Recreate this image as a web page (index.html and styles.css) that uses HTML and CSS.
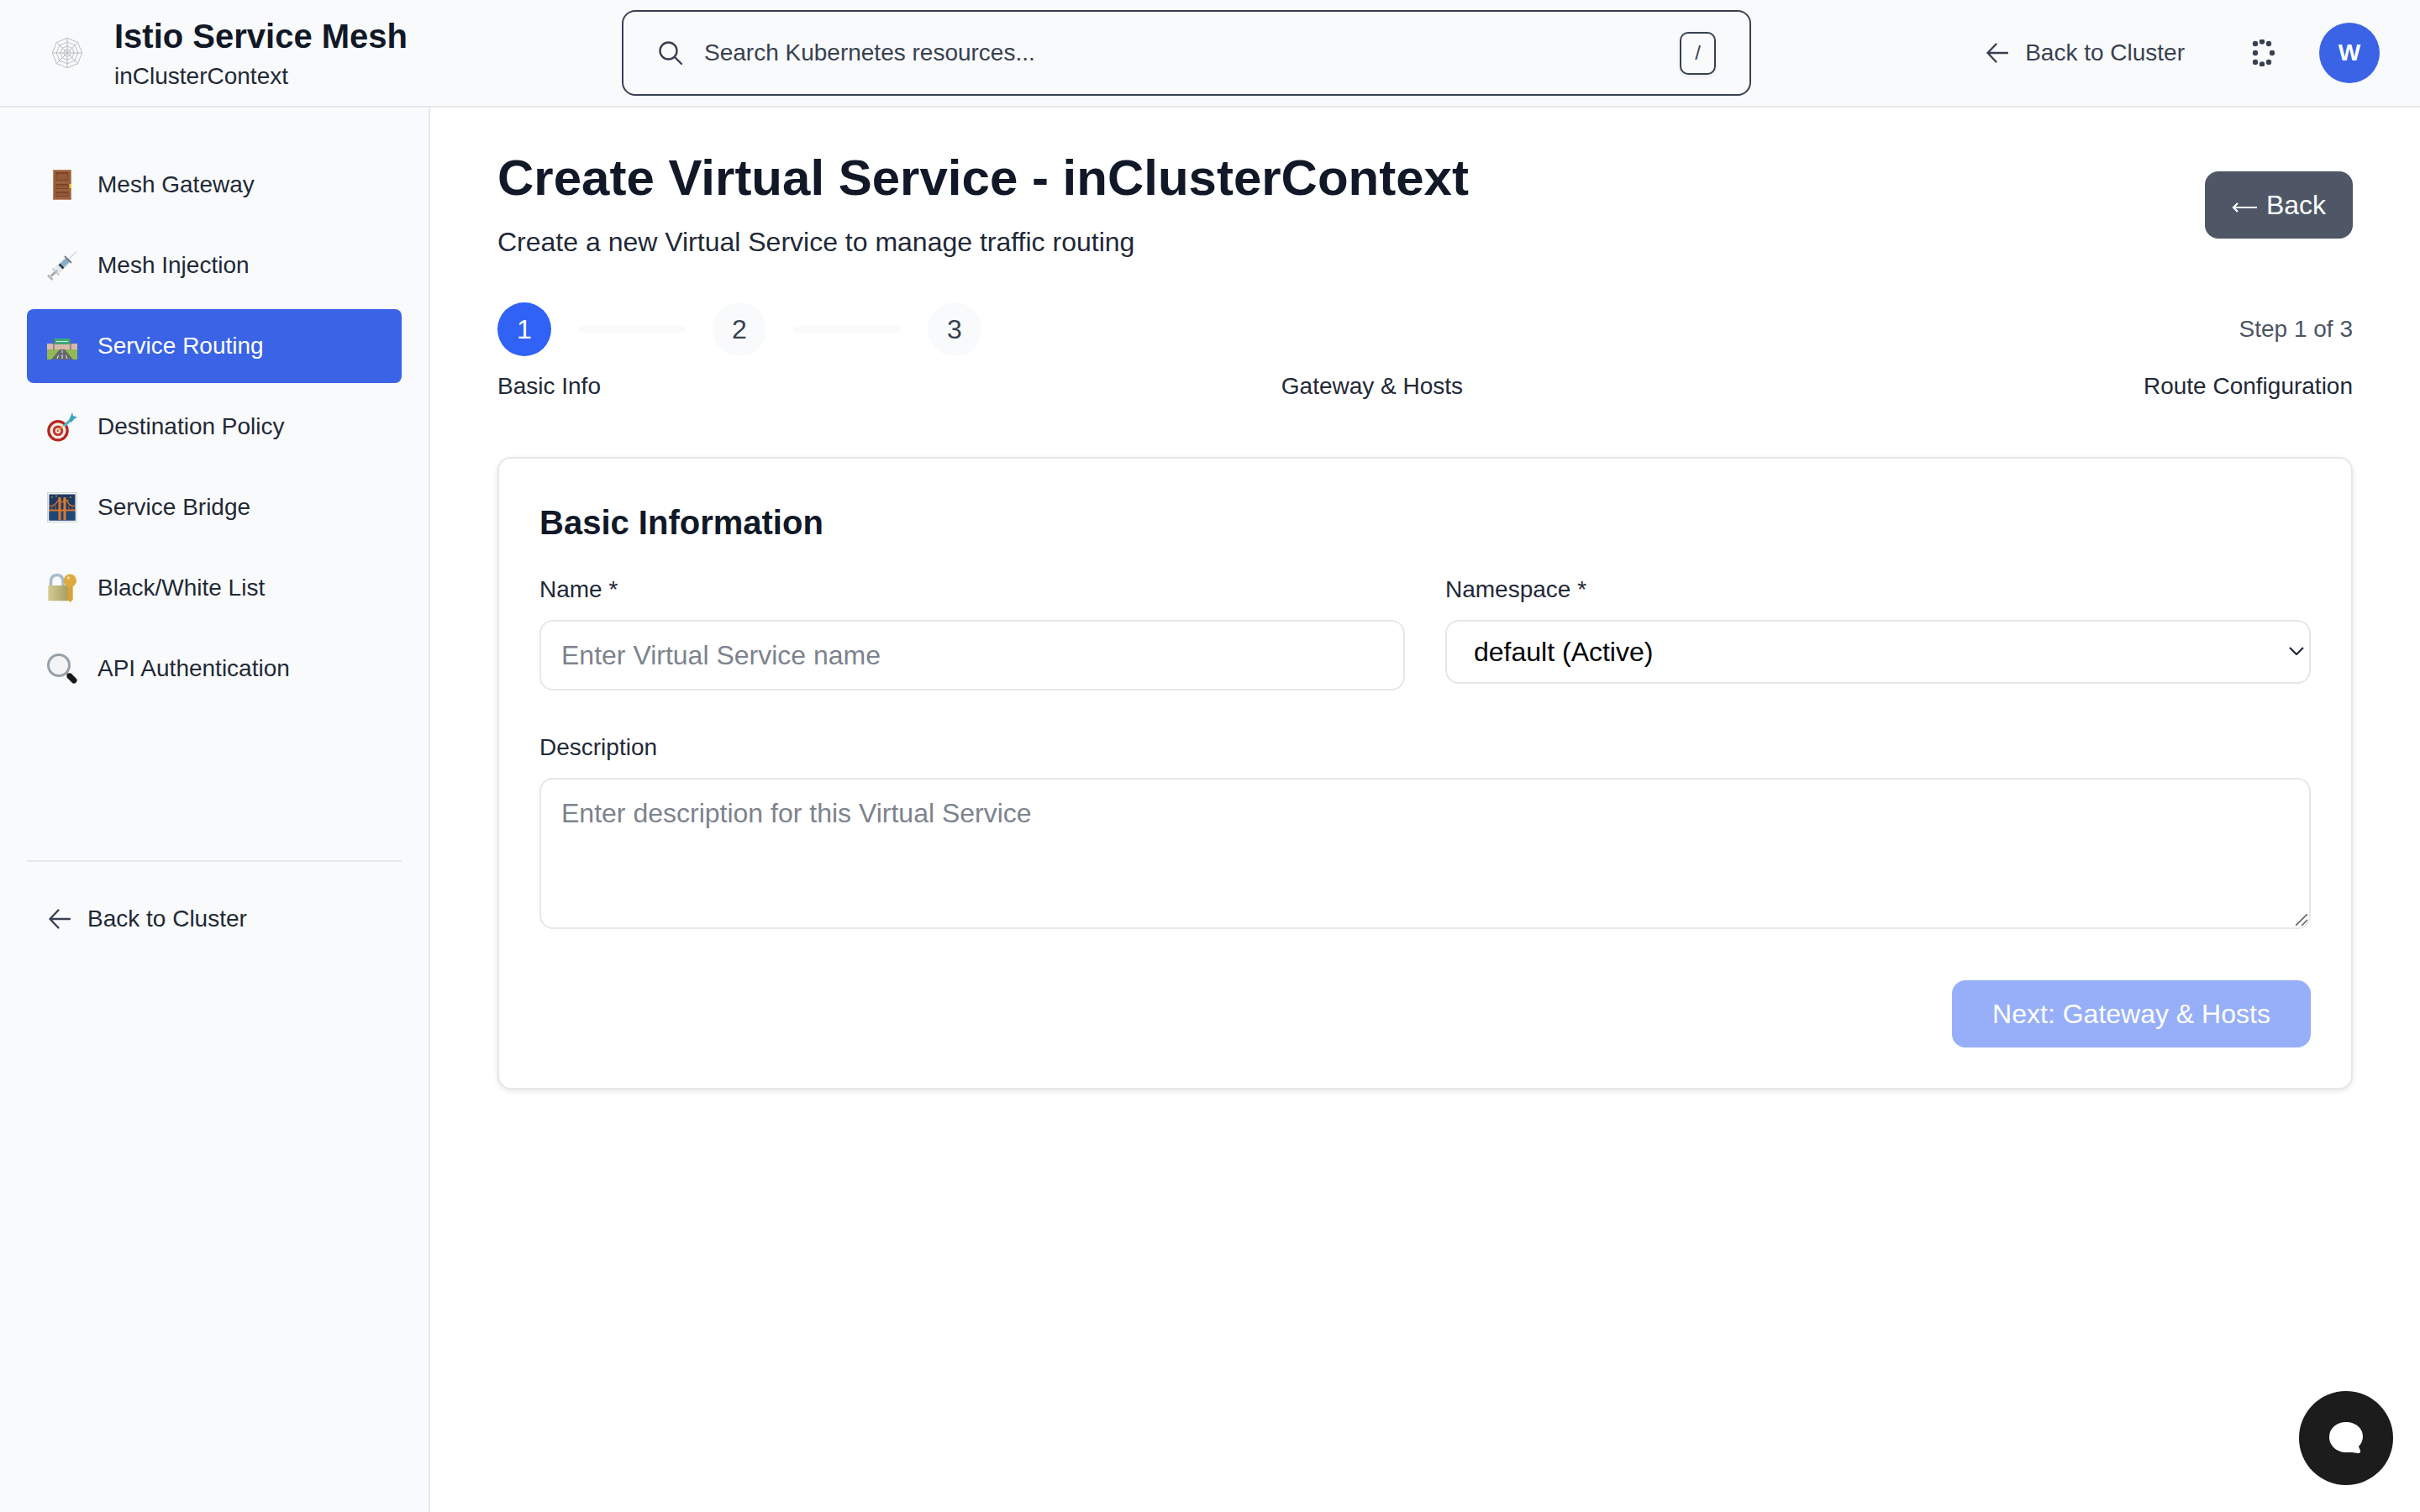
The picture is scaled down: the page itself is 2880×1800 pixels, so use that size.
FILE: index.html
```html
<!DOCTYPE html>
<html lang="en">
<head>
<meta charset="utf-8">
<title>Create Virtual Service</title>
<link rel="stylesheet" href="styles.css">
</head>
<body>
<header class="topbar">
  <div class="brand">
    <svg class="brand-icon" viewBox="-18 -18 36 36" fill="none" stroke="#b4b6ba" stroke-width="0.900">
      <defs>
        <path id="web" d="M0-18Q6.100-14.800 12.700-12.700Q14.800-6.100 18 0Q14.800 6.100 12.700 12.700Q6.100 14.800 0 18Q-6.100 14.800-12.700 12.700Q-14.800 6.100-18 0Q-14.800-6.100-12.700-12.700Q-6.100-14.800 0-18Z"/>
      </defs>
      <path d="M0-18V18M-18 0H18M-12.700-12.700L12.700 12.700M-12.700 12.700L12.700-12.700"/>
      <use href="#web"/>
      <use href="#web" transform="scale(.72)" stroke-width="1.250"/>
      <use href="#web" transform="scale(.46)" stroke-width="1.950"/>
      <use href="#web" transform="scale(.24)" stroke-width="3.700"/>
    </svg>
    <div class="brand-text">
      <div class="brand-title">Istio Service Mesh</div>
      <div class="brand-sub">inClusterContext</div>
    </div>
  </div>
  <div class="search">
    <svg class="search-icon" viewBox="0 0 28 28" fill="none" stroke="#374151" stroke-width="2.400" stroke-linecap="round">
      <circle cx="11.500" cy="11.500" r="10"/>
      <path d="M19 19L27 27"/>
    </svg>
    <span class="search-text">Search Kubernetes resources...</span>
    <span class="kbd">/</span>
  </div>
  <div class="top-actions">
    <a class="top-back">
      <svg class="arrow" viewBox="0 0 26 24" fill="none" stroke="#374151" stroke-width="2.400" stroke-linecap="round" stroke-linejoin="round">
        <path d="M25 12H1.500M11.500 1.500L1.500 12l10 10.500"/>
      </svg>
      <span>Back to Cluster</span>
    </a>
    <svg class="spinner" viewBox="0 0 32 32" fill="#374151">
      <circle cx="16" cy="2.500" r="3.200"/>
      <circle cx="24" cy="5" r="3.200"/>
      <circle cx="28" cy="16" r="3.200"/>
      <circle cx="24" cy="27" r="3.200"/>
      <circle cx="16" cy="29.500" r="3.200"/>
      <circle cx="8" cy="27" r="3.200"/>
      <circle cx="8" cy="16" r="3.200"/>
      <circle cx="8" cy="5" r="3.200"/>
    </svg>
    <div class="avatar">W</div>
  </div>
</header>

<div class="body-row">
  <aside class="sidebar">
    <nav class="nav">
      <a class="nav-item">
        <svg class="emoji" viewBox="0 0 36 36">
          <rect x="7" y="0" width="22" height="36" fill="#9c5f3c"/>
          <rect x="7.400" y="0.400" width="21.200" height="35.200" fill="none" stroke="#c29277" stroke-width="0.800"/>
          <rect x="10.500" y="3" width="15" height="10" fill="#7a4429"/>
          <rect x="11.500" y="5" width="13" height="7" fill="#925a39"/>
          <rect x="10.500" y="17" width="15" height="6" fill="#7a4429"/>
          <rect x="11.500" y="19" width="13" height="3" fill="#925a39"/>
          <rect x="10.500" y="26" width="15" height="6" fill="#7a4429"/>
          <rect x="11.500" y="28" width="13" height="3" fill="#925a39"/>
          <rect x="26.500" y="17" width="2.500" height="5" fill="#e9c53e"/>
        </svg>
        <span>Mesh Gateway</span>
      </a>
      <a class="nav-item">
        <svg class="emoji" viewBox="0 0 36 36">
          <path d="M25 11L35.500 1" stroke="#d2d5d8" stroke-width="1.200"/>
          <path d="M28.200 14.200L21.800 7.800L8.800 20.800L15.200 27.200Z" fill="#e3e7ea"/>
          <path d="M27 13.500L22.500 9L15.500 16L20 20.500Z" fill="#86aec9"/>
          <path d="M14.500 16.500L19.500 21.500" stroke="#33383d" stroke-width="2.500"/>
          <path d="M21 7L29 15" stroke="#5a6167" stroke-width="1.600"/>
          <path d="M12 24L5 30.500" stroke="#a4a8ad" stroke-width="3"/>
          <path d="M6.500 21.500L14.500 29.500" stroke="#c3c7ca" stroke-width="2"/>
          <path d="M1 29.500L6.500 35" stroke="#b5b9bd" stroke-width="3"/>
        </svg>
        <span>Mesh Injection</span>
      </a>
      <a class="nav-item active">
        <svg class="emoji" viewBox="0 0 36 36">
          <rect x="0" y="15" width="36" height="7" fill="#d9b9aa"/>
          <rect x="0" y="22" width="36" height="12" fill="#93b955"/>
          <path d="M15 22H21L31 34H5Z" fill="#64696e"/>
          <path d="M18 23V26M18 28V33M13.500 29L12 33M22.500 29L24 33" stroke="#f1f1f1" stroke-width="1"/>
          <path d="M8 10V23M28 10V23" stroke="#6b7075" stroke-width="1.200"/>
          <path d="M6 15H30" stroke="#6b7075" stroke-width="1"/>
          <rect x="9" y="9" width="18" height="7" fill="#3fa974"/>
          <path d="M11 12.500H25" stroke="#c9ecd9" stroke-width="1"/>
        </svg>
        <span>Service Routing</span>
      </a>
      <a class="nav-item">
        <svg class="emoji" viewBox="0 0 36 36">
          <circle cx="13" cy="22.700" r="12.800" fill="#b5281f"/>
          <circle cx="13" cy="22.700" r="9.500" fill="#f4ece8"/>
          <circle cx="13" cy="22.700" r="6.300" fill="#c5362c"/>
          <circle cx="13" cy="22.700" r="3.200" fill="#f4ece8"/>
          <circle cx="13" cy="22.700" r="1.300" fill="#c5362c"/>
          <path d="M13 22.700L20 16" stroke="#dcae3f" stroke-width="1.200"/>
          <path d="M19 16L27 9L29 11L22 18Z" fill="#4bb4c6"/>
          <path d="M26 10L30 1L31 5L36 6.500L32 9L29 13Z" fill="#3da6b8"/>
        </svg>
        <span>Destination Policy</span>
      </a>
      <a class="nav-item">
        <svg class="emoji" viewBox="0 0 36 36">
          <rect x="0.400" y="0.400" width="35.200" height="35.200" fill="#eef0f2" stroke="#c8ccd0" stroke-width="0.800"/>
          <rect x="2.500" y="2.500" width="31" height="31" fill="#1d3a63"/>
          <rect x="2.500" y="23" width="31" height="10.500" fill="#1f4679"/>
          <path d="M2.500 16Q10 18 15 6M33.500 16Q26 18 21 6M15 6Q18 18 21 6" stroke="#d9782f" stroke-width="1.200" fill="none"/>
          <rect x="2.500" y="20.500" width="31" height="2" fill="#d9782f"/>
          <path d="M6 17V21M10 15V21M26 15V21M30 17V21" stroke="#c96d2b" stroke-width="0.800"/>
          <rect x="13.500" y="6" width="3" height="27" fill="#d9782f"/>
          <rect x="19.500" y="6" width="3" height="27" fill="#d9782f"/>
          <circle cx="6" cy="6" r="0.800" fill="#e9c53e"/>
          <circle cx="11" cy="4.500" r="0.800" fill="#e9c53e"/>
          <circle cx="28" cy="6" r="0.800" fill="#e9c53e"/>
          <circle cx="25" cy="10" r="0.800" fill="#e9c53e"/>
        </svg>
        <span>Service Bridge</span>
      </a>
      <a class="nav-item">
        <svg class="emoji" viewBox="0 0 36 36">
          <defs>
            <linearGradient id="lockbody" x1="0" x2="1" y1="0" y2="0">
              <stop offset="0" stop-color="#d3cc94"/>
              <stop offset="1" stop-color="#a59d62"/>
            </linearGradient>
          </defs>
          <path d="M4.500 16V11Q4.500 2.500 12 2.500Q19 2.500 19 11V16" fill="none" stroke="#a9bccb" stroke-width="3.500"/>
          <rect x="1.300" y="15" width="24" height="18.300" rx="1" fill="url(#lockbody)"/>
          <path d="M24.500 14.500H30.700V32L27.500 35L24.500 32Z" fill="#d6a238"/>
          <circle cx="27.300" cy="9.300" r="7.700" fill="#dcaa40"/>
          <circle cx="25.500" cy="6" r="1.800" fill="#f2dca0"/>
        </svg>
        <span>Black/White List</span>
      </a>
      <a class="nav-item">
        <svg class="emoji" viewBox="0 0 36 36">
          <path d="M23 23L27 27" stroke="#6d7277" stroke-width="3"/>
          <path d="M27 27L32 32" stroke="#17191c" stroke-width="7" stroke-linecap="round"/>
          <circle cx="14" cy="14" r="12.500" fill="#f3f4f5" stroke="#97a1aa" stroke-width="3"/>
        </svg>
        <span>API Authentication</span>
      </a>
    </nav>
    <div class="side-foot">
      <a class="side-back">
        <svg class="arrow" viewBox="0 0 26 24" fill="none" stroke="#374151" stroke-width="2.400" stroke-linecap="round" stroke-linejoin="round">
          <path d="M25 12H1.500M11.500 1.500L1.500 12l10 10.500"/>
        </svg>
        <span>Back to Cluster</span>
      </a>
    </div>
  </aside>

  <main class="main">
    <div class="page-head">
      <div>
        <h1 class="page-title">Create Virtual Service - inClusterContext</h1>
        <p class="page-sub">Create a new Virtual Service to manage traffic routing</p>
      </div>
      <button class="back-btn">
        <svg class="back-arrow" viewBox="0 0 30 12" fill="none" stroke="#fff" stroke-width="2.200">
          <path d="M30 6H2M7 1L2 6l5 5"/>
        </svg>
        <span>Back</span>
      </button>
    </div>

    <div class="stepper">
      <div class="steps">
        <span class="step current">1</span>
        <span class="step-line"></span>
        <span class="step">2</span>
        <span class="step-line"></span>
        <span class="step">3</span>
      </div>
      <span class="step-count">Step 1 of 3</span>
    </div>
    <div class="step-labels">
      <span>Basic Info</span>
      <span>Gateway &amp; Hosts</span>
      <span>Route Configuration</span>
    </div>

    <section class="card">
      <h2 class="card-title">Basic Information</h2>
      <div class="grid">
        <div class="field">
          <label class="label">Name *</label>
          <input class="input" placeholder="Enter Virtual Service name">
        </div>
        <div class="field">
          <label class="label">Namespace *</label>
          <div class="select-wrap">
            <select class="select"><option>default (Active)</option></select>
            <svg class="chevron" viewBox="0 0 18 10" fill="none" stroke="#23263a" stroke-width="2.200"><path d="M1 1l8 8 8-8"/></svg>
          </div>
        </div>
      </div>
      <div class="field desc">
        <label class="label">Description</label>
        <div class="textarea-wrap">
          <textarea class="textarea" placeholder="Enter description for this Virtual Service"></textarea>
          <svg class="grip" viewBox="0 0 14 14" fill="none" stroke="#666" stroke-width="1.600"><path d="M0 14L14 0M7 14L14 7"/></svg>
        </div>
      </div>
      <div class="card-foot">
        <button class="next-btn">Next: Gateway &amp; Hosts</button>
      </div>
    </section>
  </main>
</div>

<button class="chat" aria-label="Chat">
  <svg viewBox="0 0 40 38" fill="#fff"><path d="M20 0C31 0 40 7 40 17C40 22 38 26 35 29L37 34Q37.500 37 34 37L27 36Q24 36 20 36C9 36 0 28 0 18C0 7 9 0 20 0Z"/></svg>
</button>
</body>
</html>
```
FILE: styles.css
```css
* { box-sizing: border-box; }
html, body { margin: 0; padding: 0; height: 1800px; overflow: hidden; }
body {
  font-family: "Liberation Sans", Arial, sans-serif;
  color: #1f2937;
  background: #fff;
  position: relative;
  display: flex;
  flex-direction: column;
}
.topbar {
  height: 128px;
  flex: none;
  background: #f9fafb;
  border-bottom: 2px solid #e5e7eb;
  display: flex;
  align-items: center;
  padding-left: 62px;
  padding-right: 48px;
}
.brand { display: flex; align-items: center; gap: 38px; width: 678px; }
.brand-icon { width: 36px; height: 36px; flex: none; }
.brand-text { display: flex; flex-direction: column; gap: 4px; }
.brand-title { font-size: 40px; line-height: 52px; font-weight: 700; color: #111827; }
.brand-sub { font-size: 28px; line-height: 36px; color: #1f2937; }
.search {
  width: 1344px;
  height: 102px;
  border: 2px solid #374151;
  border-radius: 16px;
  background: #f9fafb;
  display: flex;
  align-items: center;
  padding: 0 40px 0 42px;
  gap: 26px;
}
.search-icon { width: 28px; height: 28px; flex: none; }
.search-text { flex: 1; font-size: 28px; color: #374151; }
.kbd {
  width: 43px;
  height: 51px;
  border: 2px solid #374151;
  border-radius: 10px;
  box-shadow: 0 2px 4px rgba(0, 0, 0, 0.08);
  display: flex;
  align-items: center;
  justify-content: center;
  font-size: 24px;
  color: #374151;
}
.top-actions { flex: 1; display: flex; align-items: center; justify-content: flex-end; }
.top-back { display: flex; align-items: center; gap: 20px; font-size: 28px; color: #374151; }
.arrow { width: 26px; height: 24px; flex: none; }
.spinner { width: 32px; height: 32px; margin-left: 76px; flex: none; }
.avatar {
  width: 72px;
  height: 72px;
  border-radius: 50%;
  background: #3a63e6;
  color: #fff;
  font-size: 28px;
  font-weight: 700;
  display: flex;
  align-items: center;
  justify-content: center;
  margin-left: 52px;
}
.body-row { flex: 1; display: flex; min-height: 0; }
.sidebar {
  width: 512px;
  flex: none;
  background: #f9fafb;
  border-right: 2px solid #e5e7eb;
  padding: 48px 32px;
}
.nav { display: flex; flex-direction: column; gap: 8px; }
.nav-item {
  height: 88px;
  border-radius: 8px;
  display: flex;
  align-items: center;
  gap: 24px;
  padding-left: 24px;
  font-size: 28px;
  color: #1f2937;
}
.nav-item.active { background: #3a63e6; color: #fff; }
.emoji { width: 36px; height: 36px; flex: none; }
.side-foot { margin-top: 184px; border-top: 2px solid #e5e7eb; padding-top: 48px; }
.side-back { display: flex; align-items: center; gap: 20px; padding-left: 26px; font-size: 28px; line-height: 40px; color: #1f2937; }
.main { flex: 1; padding: 48px 80px 0; min-width: 0; }
.page-head { display: flex; justify-content: space-between; align-items: center; margin-bottom: 48px; }
.page-title { margin: 0 0 16px; font-size: 60px; line-height: 72px; font-weight: 700; color: #111827; }
.page-sub { margin: 0; font-size: 32px; line-height: 48px; color: #1f2937; }
.back-btn {
  width: 176px;
  height: 80px;
  border: 0;
  border-radius: 16px;
  background: #4f5766;
  color: #fff;
  font-family: inherit;
  font-size: 32px;
  padding: 0;
  display: flex;
  align-items: center;
  justify-content: center;
  gap: 11px;
}
.back-arrow { width: 30px; height: 12px; margin-top: 6px; flex: none; }
.stepper { display: flex; justify-content: space-between; align-items: center; }
.steps { display: flex; align-items: center; }
.step {
  width: 64px;
  height: 64px;
  border-radius: 50%;
  background: #f9fafb;
  color: #374151;
  font-size: 32px;
  display: flex;
  align-items: center;
  justify-content: center;
}
.step.current { background: #2f62f5; color: #fff; }
.step-line { width: 128px; height: 8px; margin: 0 32px; background: #f9fafb; }
.step-count { font-size: 28px; color: #4b5563; }
.step-labels {
  display: flex;
  justify-content: space-between;
  margin-top: 16px;
  font-size: 28px;
  line-height: 40px;
  color: #1f2937;
}
.card {
  margin-top: 64px;
  border: 2px solid #e5e7eb;
  border-radius: 16px;
  box-shadow: 0 2px 6px rgba(0, 0, 0, 0.1);
  background: #fff;
  padding: 48px;
}
.card-title { margin: 0 0 32px; font-size: 40px; line-height: 56px; font-weight: 700; color: #111827; }
.grid { display: grid; grid-template-columns: 1fr 1fr; column-gap: 48px; }
.field { display: flex; flex-direction: column; align-items: stretch; }
.desc { margin-top: 48px; }
.label { font-size: 28px; line-height: 40px; margin-bottom: 16px; color: #1f2937; }
.input, .textarea {
  display: block;
  width: 100%;
  border: 2px solid #e5e7eb;
  border-radius: 16px;
  background: #fff;
  font-family: inherit;
  font-size: 32px;
  color: #1f2937;
  outline: none;
}
.input { height: 84px; padding: 0 24px; }
.input::placeholder, .textarea::placeholder { color: #7d838e; opacity: 1; }
.select-wrap, .textarea-wrap { position: relative; }
.select {
  display: block;
  width: 100%;
  height: 76px;
  border: 2px solid #e5e7eb;
  border-radius: 16px;
  background: #fff;
  font-family: inherit;
  font-size: 32px;
  color: #000;
  padding: 0 32px;
  appearance: none;
  outline: none;
}
.chevron { position: absolute; right: 8px; top: 32px; width: 18px; height: 10px; pointer-events: none; }
.textarea { height: 180px; padding: 20px 24px; resize: none; line-height: 40px; }
.grip { position: absolute; right: 4px; bottom: 4px; width: 14px; height: 14px; pointer-events: none; }
.card-foot { display: flex; justify-content: flex-end; margin-top: 61px; }
.next-btn {
  height: 80px;
  width: 427px;
  border: 0;
  border-radius: 16px;
  background: #96aff8;
  color: #fff;
  font-family: inherit;
  font-size: 32px;
  padding: 0;
}
.chat {
  position: absolute;
  right: 32px;
  bottom: 32px;
  width: 112px;
  height: 112px;
  border: 0;
  border-radius: 50%;
  background: #1c1c1c;
  display: flex;
  align-items: center;
  justify-content: center;
  padding: 0;
}
.chat svg { width: 40px; height: 38px; }
```
